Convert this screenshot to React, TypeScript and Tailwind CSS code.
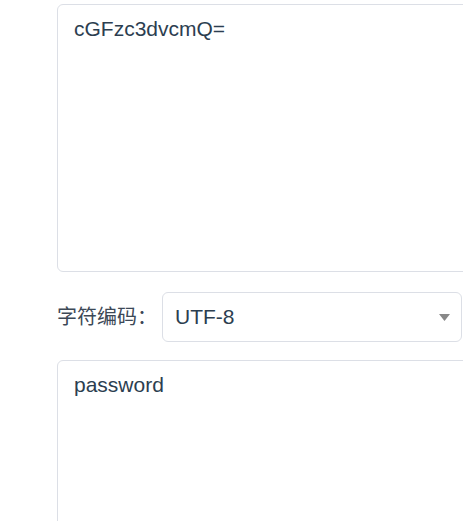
const font = { fontFamily: '"Liberation Sans", "Noto Sans CJK SC", sans-serif' };

export default function App() {
  return (
    <div className="w-[463px] h-[521px] overflow-hidden bg-white" style={font}>
      <div className="w-[560px] pl-[57px] pt-[4px]">
        {/* Encoded input */}
        <div className="h-[268px] rounded-md border border-[#dcdfe6] px-4 pt-[9px] text-[21px] leading-[30px] text-[#2c3e50]">
          cGFzc3dvcmQ=
        </div>

        {/* Charset select */}
        <div className="mt-[20px] flex items-center">
          <span className="w-[105px] text-[20px] text-[#3c4856]">字符编码：</span>
          <div className="flex h-[50px] w-[300px] items-center justify-between rounded-md border border-[#dcdfe6] pl-[12px] pr-[11px]">
            <span className="text-[21px] text-[#2c3e50]">UTF-8</span>
            <svg width="11" height="7" viewBox="0 0 11 7">
              <path d="M0 0 H11 L5.5 7 Z" fill="#888" />
            </svg>
          </div>
        </div>

        {/* Decoded output */}
        <div className="mt-[18px] h-[220px] rounded-md border border-[#dcdfe6] px-4 pt-[9px] text-[21px] leading-[30px] text-[#2c3e50]">
          password
        </div>
      </div>
    </div>
  );
}
